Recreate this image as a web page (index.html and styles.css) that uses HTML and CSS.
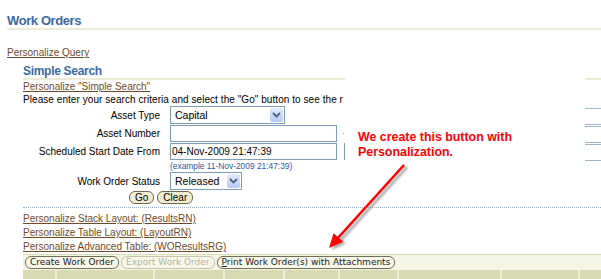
FILE: index.html
```html
<!DOCTYPE html>
<html lang="en">
<head>
  <meta charset="UTF-8" />
  <title>Work Orders</title>
  <link rel="stylesheet" href="styles.css">
</head>
<body>

  <div class="page">
    <h1 class="page-title">Work Orders</h1>
    <a href="#" class="plink query-link">Personalize Query</a>

    <div class="region">
      <div class="search-row">
        <div class="search">
          <h2 class="sub-title">Simple Search</h2>
          <a href="#" class="plink">Personalize "Simple Search"</a>
          <p class="hint">Please enter your search criteria and select the "Go" button to see the r</p>

          <div class="form">
            <div class="form-row">
              <label class="form-label">Asset Type</label>
              <div class="combo combo-wide">
                <span class="combo-text">Capital</span>
                <span class="combo-btn"><svg width="9" height="6" viewBox="0 0 9 6"><polyline points="1,1 4.5,4.5 8,1" fill="none" stroke="#4d6185" stroke-width="1.8"/></svg></span>
              </div>
            </div>
            <div class="form-row">
              <label class="form-label">Asset Number</label>
              <div class="field"></div>
              <span class="cal-dot"></span>
            </div>
            <div class="form-row">
              <label class="form-label">Scheduled Start Date From</label>
              <div class="field">04-Nov-2009 21:47:39</div>
              <span class="cal-bar"></span>
            </div>
            <div class="example">(example 11-Nov-2009 21:47:39)</div>
            <div class="form-row">
              <label class="form-label">Work Order Status</label>
              <div class="combo combo-narrow">
                <span class="combo-text">Released</span>
                <span class="combo-btn"><svg width="9" height="6" viewBox="0 0 9 6"><polyline points="1,1 4.5,4.5 8,1" fill="none" stroke="#4d6185" stroke-width="1.8"/></svg></span>
              </div>
            </div>
            <div class="form-actions">
              <button class="btn">Go</button>
              <button class="btn">Clear</button>
            </div>
          </div>
        </div>

        <!-- second column, cut off by the screenshot edge -->
        <div class="side">
          <div class="side-rule"></div>
          <div class="side-box first"></div>
          <div class="side-box"></div>
          <div class="side-box"></div>
        </div>
      </div>

      <div class="dots"></div>

      <div class="links">
        <a href="#" class="plink">Personalize Stack Layout: (ResultsRN)</a>
        <a href="#" class="plink">Personalize Table Layout: (LayoutRN)</a>
        <a href="#" class="plink">Personalize Advanced Table: (WOResultsRG)</a>
      </div>

      <div class="results">
        <div class="btn-bar">
          <button class="tbtn">Create Work Order</button>
          <button class="tbtn" disabled>Export Work Order</button>
          <button class="tbtn"><u>P</u>rint Work Order(s) with Attachments</button>
        </div>
        <div class="thead">
          <span class="th"></span><span class="th"></span><span class="th"></span>
          <span class="th"></span><span class="th"></span><span class="th"></span>
          <span class="th"></span><span class="th"></span><span class="th"></span>
        </div>
      </div>
    </div>
  </div>

  <!-- Annotation -->
  <div class="note">We create this button with<br>Personalization.</div>
  <svg class="arrow" viewBox="0 0 601 279">
    <defs>
      <filter id="soft" x="-20%" y="-20%" width="140%" height="140%"><feGaussianBlur stdDeviation="1.3"/></filter>
    </defs>
    <g fill="#777" stroke="#777" opacity="0.6" filter="url(#soft)" transform="translate(3 2)">
      <line x1="404" y1="165" x2="337" y2="239" stroke-width="3"/>
      <polygon points="329,248 334,233.6 342.8,241.6" stroke-width="0"/>
    </g>
    <g fill="#f00" stroke="#f00">
      <line x1="404" y1="165" x2="337" y2="239" stroke-width="2.6"/>
      <polygon points="329,248 333.5,233.2 343.2,241.8" stroke-width="0"/>
    </g>
  </svg>

</body>
</html>
```

FILE: styles.css
```css
body {
  margin: 0;
  font-family: "Liberation Sans", Arial, sans-serif;
  font-size: 10px;
  color: #000;
  background: #fff;
  position: relative;
  height: 279px;
  overflow: hidden;
}
.page {
  padding: 13px 0 0 7px;
}
.page-title {
  margin: 0;
  font-size: 13px;
  letter-spacing: -0.4px;
  line-height: 15px;
  color: #3b6aa5;
  border-bottom: 2px solid #ebebd6;
}
.plink {
  display: block;
  width: max-content;
  line-height: 12px;
  color: #704a28;
  text-decoration: underline;
}
.query-link { margin-top: 17px; }
.region {
  margin: 5px 0 0 16px;
}
.search-row { display: flex; }
.search {
  width: 322px;
  white-space: nowrap;
}
.sub-title {
  margin: 0;
  font-size: 12px;
  letter-spacing: -0.3px;
  line-height: 14px;
  color: #3b6aa5;
  border-bottom: 2px solid #ebebd6;
}
.search .plink { line-height: 13px; }
.hint {
  margin: 0;
  line-height: 13px;
  letter-spacing: 0.06px;
}
.form {
  display: flex;
  flex-direction: column;
  gap: 1px;
}
.form-row {
  display: flex;
  align-items: center;
}
.form-label {
  width: 137px;
  margin-right: 10px;
  text-align: right;
}
.field {
  box-sizing: border-box;
  width: 167px;
  height: 17px;
  border: 1px solid #7f9db9;
  padding: 0 1px;
  line-height: 15px;
}
.cal-dot {
  width: 1px;
  height: 1px;
  margin-left: 6px;
  background: #7f9db9;
}
.cal-bar {
  width: 1px;
  height: 17px;
  margin-left: 7px;
  background: #7f9db9;
}
.combo {
  box-sizing: border-box;
  display: flex;
  height: 18px;
  border: 1px solid #7f9db9;
  padding: 1px;
  background: #fff;
}
.combo-wide { width: 115px; }
.combo-narrow { width: 72px; }
.combo-text {
  flex: 1;
  padding-left: 3px;
  line-height: 14px;
  font-size: 10.5px;
}
.combo-btn {
  width: 13px;
  border-radius: 2px;
  background: linear-gradient(#e2eafd, #b6c9f4);
  display: flex;
  align-items: center;
  justify-content: center;
}
.example {
  margin-left: 147px;
  font-size: 8.4px;
  line-height: 10px;
  color: #3355a0;
}
.form-actions {
  display: flex;
  gap: 3px;
  padding-left: 106px;
}
.btn {
  height: 13px;
  padding: 0 5px;
  font-family: inherit;
  font-size: 10px;
  line-height: 11px;
  color: #000;
  background: #efedd2;
  border: 1px solid #6a6850;
  border-radius: 6px;
}
.side {
  width: 16px;
  margin-left: 240px;
}
.side-rule {
  height: 14px;
  border-bottom: 2px solid #ebebd6;
}
.side-box {
  box-sizing: border-box;
  height: 17px;
  margin-top: 1px;
  border-top: 1px solid #9fb4d0;
  border-bottom: 1px solid #9fb4d0;
}
.side-box.first { margin-top: 28px; }
.dots {
  margin-top: 3px;
  border-top: 1px dotted #9aaecb;
}
.links { padding-top: 4px; }
.links .plink { line-height: 14px; }
.results {
  border-top: 1px solid #d9dcb8;
}
.btn-bar {
  display: flex;
  gap: 2px;
  padding: 1px 0 1px 2px;
  background: #f5f5e4;
}
.tbtn {
  height: 13px;
  padding: 0 4px;
  font-family: "DejaVu Sans", Verdana, sans-serif;
  font-size: 9px;
  line-height: 11px;
  color: #222;
  background: #f8f7ea;
  border: 1px solid #6f6f58;
  border-radius: 6px;
}
.tbtn:disabled {
  color: #b4b4a4;
  border-color: #c4c4b0;
}
.thead {
  display: grid;
  grid-template-columns: 32px 98px 70px 60px 55px 59px 103px 78px 1fr;
  height: 12px;
  background: #d7dab3;
}
.th + .th { border-left: 2px solid #eceed8; }
.note {
  position: absolute;
  left: 358px;
  top: 130px;
  font-size: 12.4px;
  font-weight: bold;
  line-height: 15px;
  color: #f00;
}
.arrow {
  position: absolute;
  left: 0;
  top: 0;
  width: 601px;
  height: 279px;
  pointer-events: none;
}
```
